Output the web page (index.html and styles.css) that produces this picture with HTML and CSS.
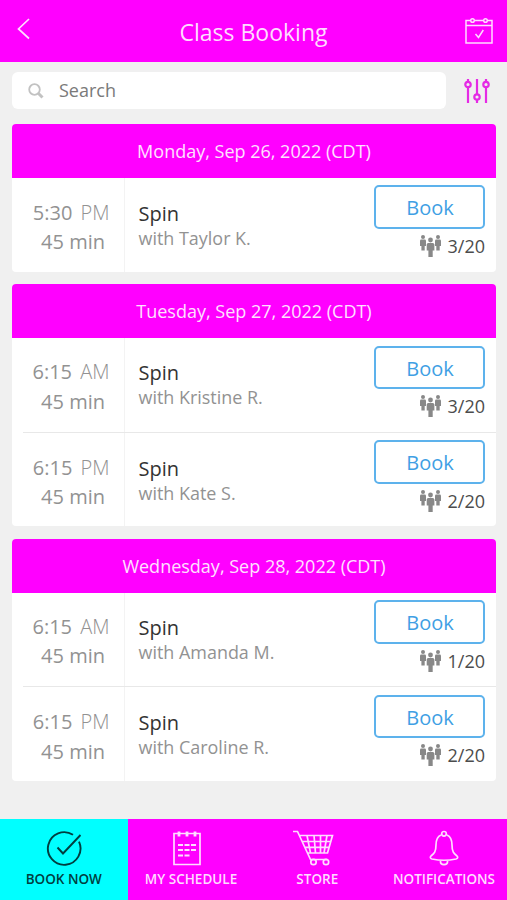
FILE: index.html
```html
<!DOCTYPE html>
<html lang="en">
<head>
<meta charset="utf-8">
<title>Class Booking</title>
<link rel="stylesheet" href="styles.css">
</head>
<body>
<svg class="defs" width="0" height="0" aria-hidden="true">
  <symbol id="people" viewBox="0 0 24 24">
    <circle cx="4" cy="3" r="2"/><path d="M2.300 5.600h3.400q1.300 0 1.300 1.300v5H5.700V16.500H2.400v-4.600H1v-5q0-1.300 1.300-1.300z"/>
    <circle cx="19" cy="3" r="2"/><path d="M17.300 5.600h3.400q1.300 0 1.300 1.300v5h-1.300v4.600h-3.400v-4.600H16v-5q0-1.300 1.300-1.300z"/>
    <circle cx="11.500" cy="6" r="2.400"/><path d="M9.300 9h4.400q1.700 0 1.700 1.600v5.800h-1.700V23H9.400v-6.600H7.700v-5.800q0-1.600 1.600-1.600z"/>
  </symbol>
</svg>
<div class="app">
  <header class="topbar">
    <svg class="back" viewBox="0 0 13 22"><path d="M12 1 1.500 11 12 20.500"/></svg>
    <h1>Class Booking</h1>
    <svg class="calendar" viewBox="0 0 28 28"><path d="M5.500 3.500H1V26h26V3.500h-4.500M9.500 3.500h9M1 8.500h26M10.500 17l3 3.500 4.800-7.500"/><circle cx="7.500" cy="3.500" r="1.800"/><circle cx="20.500" cy="3.500" r="1.800"/></svg>
  </header>
  <div class="searchbar">
    <div class="field">
      <svg class="lens" viewBox="0 0 16 16"><circle cx="6.500" cy="6.500" r="5.300"/><path class="handle" d="m10.500 10.500 4 4"/></svg>
      <span>Search</span>
    </div>
    <svg class="filter" viewBox="0 0 26 26"><path d="M4 1v3M4 9v16M13 1v15M13 22v3M22 1v3M22 9v16"/><circle cx="4" cy="6.500" r="2.700"/><circle cx="13" cy="19" r="2.700"/><circle cx="22" cy="6.500" r="2.700"/></svg>
  </div>
  <main>
    <section class="card">
      <h2>Monday, Sep 26, 2022 (CDT)</h2>
      <article class="row single">
        <div class="time"><div class="clock">5:30 <span>PM</span></div><div class="length">45 min</div></div>
        <div class="info"><h3>Spin</h3><p>with Taylor K.</p></div>
        <div class="action"><button>Book</button><div class="count"><svg><use href="#people"/></svg>3/20</div></div>
      </article>
    </section>
    <section class="card">
      <h2>Tuesday, Sep 27, 2022 (CDT)</h2>
      <article class="row">
        <div class="time"><div class="clock">6:15 <span>AM</span></div><div class="length">45 min</div></div>
        <div class="info"><h3>Spin</h3><p>with Kristine R.</p></div>
        <div class="action"><button>Book</button><div class="count"><svg><use href="#people"/></svg>3/20</div></div>
      </article>
      <article class="row">
        <div class="time"><div class="clock">6:15 <span>PM</span></div><div class="length">45 min</div></div>
        <div class="info"><h3>Spin</h3><p>with Kate S.</p></div>
        <div class="action"><button>Book</button><div class="count"><svg><use href="#people"/></svg>2/20</div></div>
      </article>
    </section>
    <section class="card">
      <h2>Wednesday, Sep 28, 2022 (CDT)</h2>
      <article class="row">
        <div class="time"><div class="clock">6:15 <span>AM</span></div><div class="length">45 min</div></div>
        <div class="info"><h3>Spin</h3><p>with Amanda M.</p></div>
        <div class="action"><button>Book</button><div class="count"><svg><use href="#people"/></svg>1/20</div></div>
      </article>
      <article class="row">
        <div class="time"><div class="clock">6:15 <span>PM</span></div><div class="length">45 min</div></div>
        <div class="info"><h3>Spin</h3><p>with Caroline R.</p></div>
        <div class="action"><button>Book</button><div class="count"><svg><use href="#people"/></svg>2/20</div></div>
      </article>
    </section>
  </main>
  <nav class="tabs">
    <a class="tab active"><svg width="36" height="36" viewBox="0 0 36 36"><path d="M27 4.800A16.300 16.300 0 1 0 33 11.700M11.500 17.500l5.500 6L34.500 5"/></svg><span>BOOK NOW</span></a>
    <a class="tab schedule"><svg width="28" height="36" viewBox="0 0 28 36"><path d="M1 3.500h26v31H1z"/><path class="thick" d="M6 1.500v5M14 1.500v5M22 1.500v5"/><path class="dashes" d="M5 15h18M5 20h18M5 25.500h12"/></svg><span>MY SCHEDULE</span></a>
    <a class="tab store"><svg width="42" height="36" viewBox="0 0 42 36"><path d="M1 1.500h4.500L18.500 29.500H35M7.500 5.500H40.500L35.500 23H16M10 11.500h29M13 17.300h24M15 5.500l3.500 17.500M22 5.500l1.500 17.500M28.500 5.500V23M35 5.500 32 23"/><circle cx="21.500" cy="32" r="2.700"/><circle cx="34" cy="32" r="2.700"/></svg><span>STORE</span></a>
    <a class="tab bell"><svg width="30" height="36" viewBox="0 0 30 36"><path d="M12 5C7.500 7 7 10.500 7 15c0 7-1.800 8.500-5 11-1.300 1.300-.7 2.500 1 3q12 2.500 24 0c1.700-.5 2.300-1.700 1-3-3.200-2.500-5-4-5-11 0-4.500-.5-8-5-10M11.500 30v2c0 3.500 7 3.500 7 0v-2"/><circle cx="15" cy="3.800" r="2.300"/></svg><span>NOTIFICATIONS</span></a>
  </nav>
</div>
</body>
</html>
```
FILE: styles.css
```css
* { box-sizing: border-box; }
body { margin: 0; background: #f0f0f0; font-family: "Open Sans", sans-serif; }
h1, h2, h3, p { margin: 0; font-weight: 400; }
svg { fill: none; stroke: currentColor; display: block; flex: none; }
.defs { position: absolute; }
.app { height: 900px; display: flex; flex-direction: column; }

.topbar { height: 61.500px; background: #f0f; color: #ffdcff; display: grid; grid-template-columns: 60px 1fr 60px; align-items: start; }
.topbar h1 { font-size: 23px; line-height: 32px; margin-top: 16px; text-align: center; }
.back { width: 13px; height: 22px; margin: 18px 0 0 17px; stroke-width: 1.700; }
.calendar { width: 28px; height: 28px; margin: 17px 0 0 17.500px; stroke-width: 1.500; }

.searchbar { height: 62px; padding: 10.500px 17px 0 12px; display: flex; justify-content: space-between; }
.field { width: 433.500px; height: 37px; border-radius: 6px; background: #fff; color: #7a7a7a; display: flex; align-items: center; padding-left: 16px; font-size: 18px; }
.field span { margin: -2px 0 0 15px; line-height: 24px; }
.lens { width: 16px; height: 16px; color: #c2c2c2; stroke-width: 1.800; }
.lens .handle { stroke-width: 3; }
.filter { width: 26px; height: 26px; margin-top: 6px; color: #e52be5; stroke-width: 2.200; }

main { flex: 1; padding: 0 11px 0 12px; display: flex; flex-direction: column; gap: 12.500px; }
.card { background: #fff; border-radius: 4px; overflow: hidden; flex: none; }
.card h2 { height: 54px; line-height: 54px; background: #f0f; color: #ffe0ff; text-align: center; font-size: 18px; }
.row { height: 93.500px; display: grid; grid-template-columns: 113px 1fr 122px; position: relative; }
.row.single { height: 94px; }
.time { border-right: 1px solid #f3f3f3; padding: 19px 14.500px 0 0; text-align: right; color: #929292; font-size: 20px; line-height: 29.500px; }
.clock span { margin-left: 3px; font-weight: 300; }
.length { padding-right: 4.500px; }
.info { padding: 21px 0 0 13.500px; }
.info h3 { font-size: 20px; line-height: 27px; color: #333; }
.info p { font-size: 17.950px; line-height: 23px; color: #929292; }
.single .time { padding-top: 20px; }
.single .info { padding-top: 22px; }
.action { padding: 7.500px 11px 0 0; display: flex; flex-direction: column; align-items: flex-end; }
button { width: 111px; height: 43.500px; padding: 2px 0 0 1px; border: 2px solid #5db2ec; border-radius: 5px; background: #fff; color: #3fa0e4; font: 400 20px/37.500px "Open Sans", sans-serif; }
.count { display: flex; align-items: center; gap: 5px; margin-top: 5px; font-size: 18px; line-height: 24px; color: #4c4c4c; }
.count svg { width: 24px; height: 24px; fill: #888; stroke: none; }
.row + .row { height: 94.500px; }
.row + .row::before { content: ""; position: absolute; top: 0; left: 11px; right: 0; height: 1px; background: #e8e8e8; }
.row + .row .time { padding-top: 21px; }
.row + .row .info { padding-top: 23px; }
.row + .row .action { padding-top: 8.500px; }

.tabs { height: 81.500px; display: grid; grid-template-columns: 127.500px 127px 126.500px 1fr; background: #f0f; color: #ffdcff; }
.tab { display: flex; flex-direction: column; align-items: center; padding-top: 11.500px; font-size: 13.500px; font-weight: 600; line-height: 18px; }
.tab span { margin-top: 3.500px; white-space: nowrap; }
.tab svg { stroke-width: 1.700; }
.store svg { margin-right: 10px; }
.store span { margin-right: 1px; }
.schedule svg { margin-right: 8px; }
.active { background: #0ff; color: #003e40; }
.active svg { stroke-width: 1.900; }
.tab .thick { stroke-width: 2.800; }
.tab .dashes { stroke-width: 2; stroke-dasharray: 5 1.500; }
```
